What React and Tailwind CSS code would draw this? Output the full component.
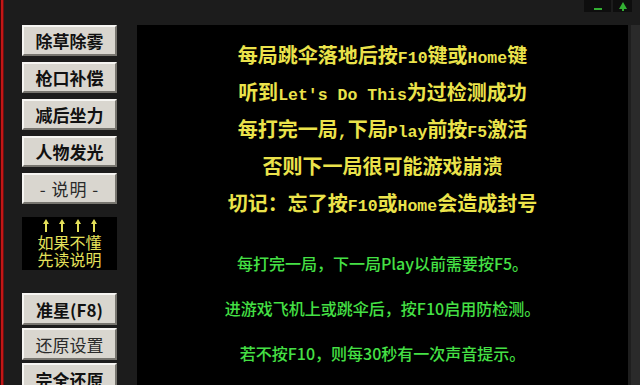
const cjk = { fontFamily: '"Noto Sans CJK SC", "Noto Sans", sans-serif' }
const mono = { fontFamily: '"Liberation Mono", "DejaVu Sans Mono", monospace' }

// split a line into CJK / ASCII runs so latin gets the half-width mono look
function Mixed({ text }) {
  const parts = text.split(/([\x20-\x7e]+)/).filter(Boolean)
  return parts.map((p, i) =>
    /^[\x20-\x7e]+$/.test(p) ? (
      <span key={i} style={mono} className="text-[16.5px] leading-none whitespace-pre">
        {p}
      </span>
    ) : (
      <span key={i} className="leading-none">{p}</span>
    )
  )
}

function WinButton({ label, bold = true, light = false, h = 'h-[31px]' }) {
  return (
    <button
      style={cjk}
      className={`flex ${h} w-[95px] shrink-0 items-center justify-center border-2 border-t-[#f6f5f2] border-l-[#f6f5f2] border-r-[#77756f] border-b-[#77756f] bg-[#d9d6cf] text-[17px] leading-none ${
        bold ? 'font-bold text-[#111]' : 'font-normal text-[#2a2a2a]'
      } ${light ? 'tracking-[1px]' : ''}`}
    >
      {label}
    </button>
  )
}

function UpArrow() {
  return (
    <svg width="16" height="14" viewBox="0 0 16 14">
      <path d="M8 1 L11 6 L9 6 L9 14 L7 14 L7 6 L5 6 Z" fill="#e4e05a" />
    </svg>
  )
}

const yellowLines = [
  '每局跳伞落地后按F10键或Home键',
  "听到Let's Do This为过检测成功",
  '每打完一局,下局Play前按F5激活',
  '否则下一局很可能游戏崩溃',
  '切记：忘了按F10或Home会造成封号',
]

const greenLines = [
  '每打完一局，下一局Play以前需要按F5。',
  '进游戏飞机上或跳伞后，按F10启用防检测。',
  '若不按F10，则每30秒有一次声音提示。',
]

export default function App() {
  return (
    <div className="flex h-[385px] w-[640px] overflow-hidden bg-[#1c1c1c]">
      {/* red window edge */}
      <div className="h-full w-[4px] shrink-0 border-l border-r border-l-[#3a0808] border-r-[#6a1010] bg-[#c41616]" />

      <div className="flex min-h-0 flex-1 flex-col">
        {/* title strip */}
        <div className="flex h-[25px] shrink-0 justify-end pr-[8px]">
          <div className="flex h-[12px] gap-[2px]">
            <div className="flex w-[27px] items-end justify-center bg-[#0e0e0e] pb-[2px]">
              <div className="h-[2px] w-[8px] bg-[#33b033]" />
            </div>
            <div className="flex w-[19px] items-center justify-center bg-[#0e0e0e]">
              <svg width="8" height="9" viewBox="0 0 8 9">
                <path d="M4 0 L8 7 L5 7 L5 9 L3 9 L3 7 L0 7 Z" fill="#33b033" />
              </svg>
            </div>
          </div>
        </div>

        <div className="flex min-h-0 flex-1">
          {/* left buttons */}
          <div className="ml-[18px] flex w-[95px] shrink-0 flex-col">
            <div className="flex flex-col gap-[6px]">
              <WinButton label="除草除雾" />
              <WinButton label="枪口补偿" />
              <WinButton label="减后坐力" />
              <WinButton label="人物发光" />
              <WinButton label="- 说明 -" bold={false} light />
            </div>

            <div
              style={cjk}
              className="mt-[13px] flex h-[53px] shrink-0 flex-col items-center bg-black pt-[1px] text-[16px] leading-[17px] text-[#e4e05a]"
            >
              <div className="flex h-[14px]">
                <UpArrow />
                <UpArrow />
                <UpArrow />
                <UpArrow />
              </div>
              <div className="mt-[2px]">如果不懂</div>
              <div>先读说明</div>
            </div>

            <div className="mt-[23px] flex flex-col gap-[3px]">
              <WinButton label="准星(F8)" h="h-[32px]" />
              <WinButton label="还原设置" bold={false} h="h-[32px]" />
              <WinButton label="完全还原" h="h-[32px]" />
            </div>
          </div>

          {/* message panel */}
          <div className="ml-[20px] flex w-[491px] shrink-0 flex-col items-center bg-black pt-[11px]">
            <div style={cjk} className="flex flex-col items-center text-[20px] font-bold text-[#ebe34b]">
              {yellowLines.map((l) => (
                <div key={l} className="flex h-[37px] items-center whitespace-nowrap">
                  <div>
                    <Mixed text={l} />
                  </div>
                </div>
              ))}
            </div>
            <div
              style={cjk}
              className="mt-[20px] flex flex-col items-center text-[16px] font-medium leading-[45px] text-[#45e045]"
            >
              {greenLines.map((l) => (
                <div key={l} className="whitespace-nowrap">
                  {l}
                </div>
              ))}
            </div>
          </div>

          {/* right edge */}
          <div className="w-[12px] shrink-0 border-l-[3px] border-l-[#1e1e1e] bg-[#2a2a2a]" />
        </div>
      </div>
    </div>
  )
}
